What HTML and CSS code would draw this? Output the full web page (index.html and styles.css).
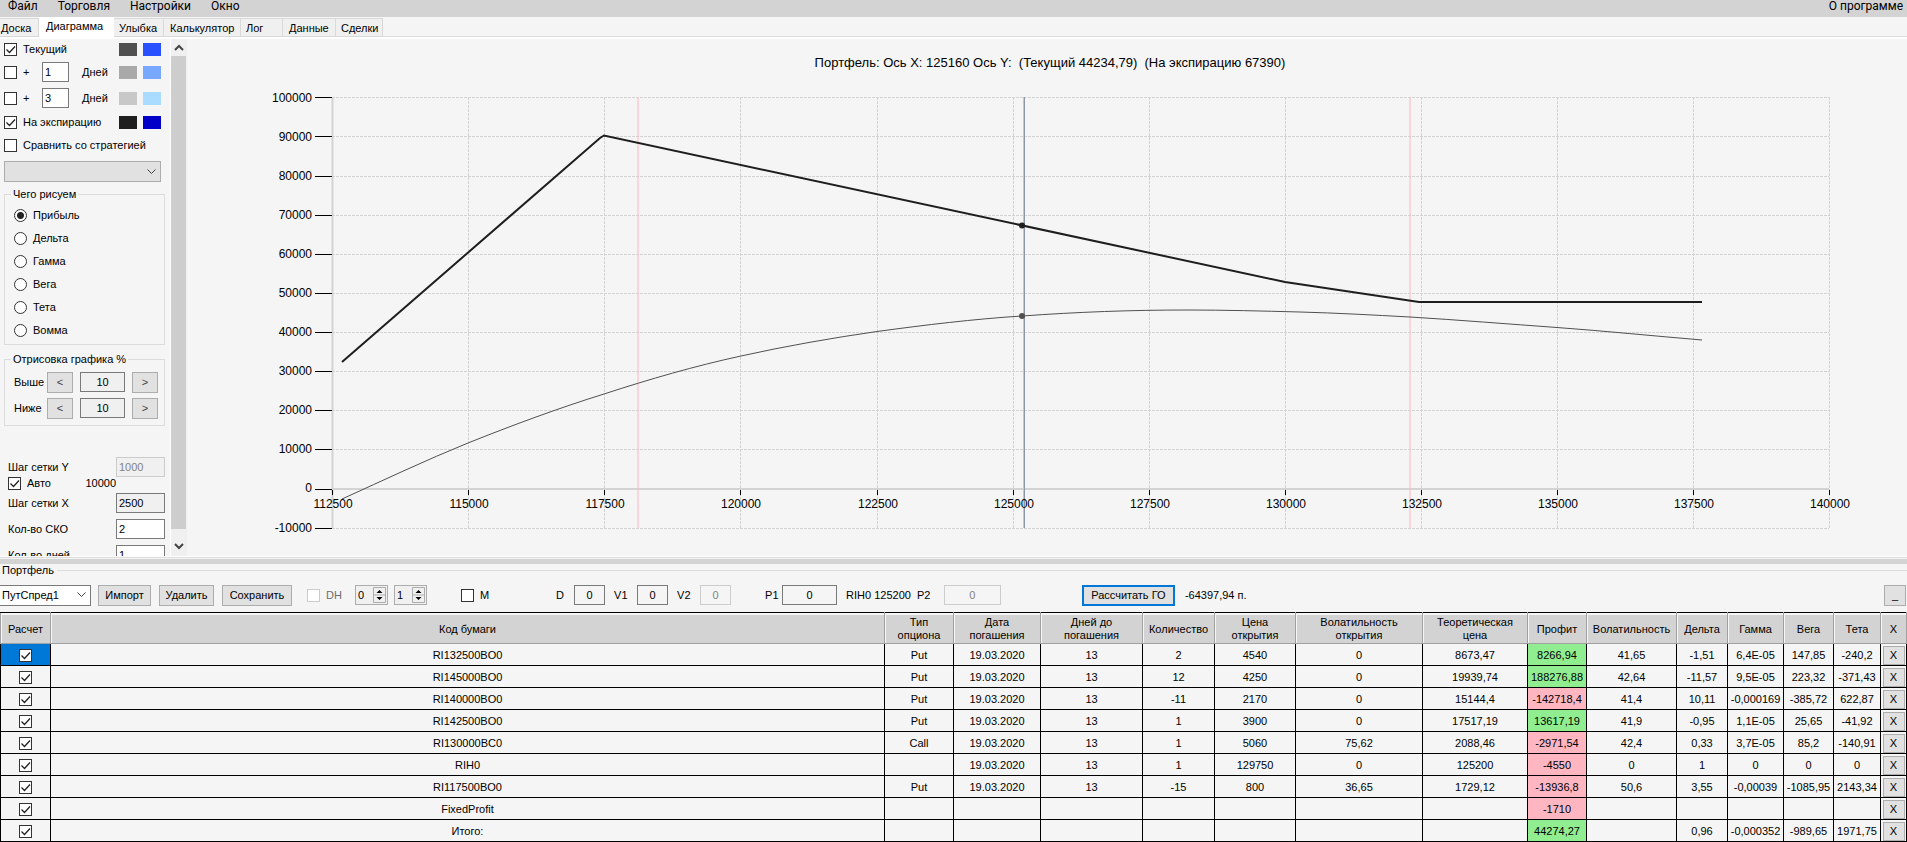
FILE: index.html
```
<!DOCTYPE html>
<html lang="ru">
<head>
    <meta charset="UTF-8">
    <meta name="viewport" content="width=device-width, initial-scale=1.0">
    <title>Портфель</title>
    <link rel="stylesheet" href="styles.css">
</head>
<body>
<div class="app">
    <nav class="menu">
        <a href="#file">Файл</a>
        <a href="#trade">Торговля</a>
        <a href="#settings">Настройки</a>
        <a href="#window">Окно</a>
        <a href="#about" class="about">О программе</a>
    </nav>

    <div class="tabs">
        <button class="tab tab-first">Доска</button>
        <button class="tab active">Диаграмма</button>
        <button class="tab tab-smile">Улыбка</button>
        <button class="tab tab-calc">Калькулятор</button>
        <button class="tab tab-log">Лог</button>
        <button class="tab tab-data">Данные</button>
        <button class="tab tab-deals">Сделки</button>
    </div>

    <main class="workspace">
        <aside class="sidebar">
            <div class="row row-current">
                <input type="checkbox" id="current" checked>
                <label for="current" class="grow">Текущий</label>
                <span class="swatch gray-1"></span><span class="swatch blue-1"></span>
            </div>
            <div class="row row-days">
                <input type="checkbox" id="plus1">
                <label for="plus1" class="plus">+</label>
                <input type="text" class="days" id="days1" value="1">
                <label for="days1" class="grow">Дней</label>
                <span class="swatch gray-2"></span><span class="swatch blue-2"></span>
            </div>
            <div class="row row-days">
                <input type="checkbox" id="plus3">
                <label for="plus3" class="plus">+</label>
                <input type="text" class="days" id="days3" value="3">
                <label for="days3" class="grow">Дней</label>
                <span class="swatch gray-3"></span><span class="swatch blue-3"></span>
            </div>
            <div class="row row-check">
                <input type="checkbox" id="expiry" checked>
                <label for="expiry" class="grow">На экспирацию</label>
                <span class="swatch gray-4"></span><span class="swatch blue-4"></span>
            </div>
            <div class="row row-check">
                <input type="checkbox" id="compare">
                <label for="compare">Сравнить со стратегией</label>
            </div>
            <select class="strategy" aria-label="Стратегия" disabled><option></option></select>

            <fieldset class="box draw">
                <legend>Чего рисуем</legend>
                <label><input type="radio" name="draw" checked>Прибыль</label>
                <label><input type="radio" name="draw">Дельта</label>
                <label><input type="radio" name="draw">Гамма</label>
                <label><input type="radio" name="draw">Вега</label>
                <label><input type="radio" name="draw">Тета</label>
                <label><input type="radio" name="draw">Вомма</label>
            </fieldset>

            <fieldset class="box range">
                <legend>Отрисовка графика %</legend>
                <div class="range-row">
                    <label for="above">Выше</label>
                    <button class="btn">&lt;</button>
                    <input type="text" id="above" value="10" readonly>
                    <button class="btn">&gt;</button>
                </div>
                <div class="range-row">
                    <label for="below">Ниже</label>
                    <button class="btn">&lt;</button>
                    <input type="text" id="below" value="10" readonly>
                    <button class="btn">&gt;</button>
                </div>
            </fieldset>

            <div class="steps">
                <div class="step">
                    <label for="stepY">Шаг сетки Y</label>
                    <input type="text" id="stepY" value="1000" disabled>
                </div>
                <div class="auto">
                    <input type="checkbox" id="auto" checked>
                    <label for="auto">Авто</label>
                    <span class="auto-value">10000</span>
                </div>
                <div class="step">
                    <label for="stepX">Шаг сетки X</label>
                    <input type="text" id="stepX" value="2500" readonly>
                </div>
                <div class="step">
                    <label for="sko">Кол-во СКО</label>
                    <input type="text" id="sko" value="2">
                </div>
                <div class="step">
                    <label for="dayCount">Кол-во дней</label>
                    <input type="text" id="dayCount" value="1">
                </div>
            </div>
        </aside>

        <div class="scrollbar" aria-hidden="true">
            <svg viewBox="0 0 16 17"><path d="M4 11l4-4 4 4"/></svg>
            <div class="thumb"></div>
            <svg viewBox="0 0 16 27"><path d="M4 15l4 4 4-4"/></svg>
        </div>

        <div class="chart">
            <svg viewBox="0 0 1720 517" role="img" aria-label="График прибыли портфеля">
                <text class="title" x="863" y="28">Портфель: Ось X: 125160 Ось Y: &#160;(Текущий 44234,79) &#160;(На экспирацию 67390)</text>

                <!-- сетка -->
                <path class="grid" d="M145 58.5H1642M145 97.5H1642M145 137.5H1642M145 176.5H1642M145 215.5H1642M145 254.5H1642M145 293.5H1642M145 332.5H1642M145 371.5H1642M145 410.5H1642M145 489.5H1642"/>
                <path class="grid" d="M281.5 58V489M417.5 58V489M553.5 58V489M690.5 58V489M826.5 58V489M962.5 58V489M1098.5 58V489M1234.5 58V489M1370.5 58V489M1506.5 58V489M1642.5 58V489"/>

                <!-- оси -->
                <path class="axis" d="M145.5 58V490M145 450H1642"/>
                <path class="tick" d="M128 58.5h17M128 97.5h17M128 137.5h17M128 176.5h17M128 215.5h17M128 254.5h17M128 293.5h17M128 332.5h17M128 371.5h17M128 410.5h17M128 450.5h17M128 489.5h17"/>
                <path class="tick" d="M145.5 451v5M281.5 451v5M417.5 451v5M553.5 451v5M690.5 451v5M826.5 451v5M962.5 451v5M1098.5 451v5M1234.5 451v5M1370.5 451v5M1506.5 451v5M1642.5 451v5"/>

                <path class="sigma" d="M451 58V489M1223 58V489"/>
                <path class="price-light" d="M836.5 58V489"/>
                <path class="price" d="M837.5 58V489"/>

                <path class="line-current" d="M155 460C197 441 239 421 281 404C326 386 372 369 417 355C463 340 508 327 554 317C599 307 645 299 690 292.5C738 286 787 280 835 277C890 273 945 271 1000 271C1038 271 1075 272 1113 273C1150 274 1186 276 1223 278C1272 281 1321 285 1370 288.5C1418 292 1467 297 1515 301"/>
                <path class="line-expiry" d="M155 323L413 99L417 96.500L1098 243L1232 263H1515"/>
                <circle class="dot-expiry" cx="835" cy="186.500" r="3"/>
                <circle class="dot-current" cx="835" cy="277" r="3"/>

                <g class="label-y">
                    <text x="125" y="63">100000</text>
                    <text x="125" y="102">90000</text>
                    <text x="125" y="141">80000</text>
                    <text x="125" y="180">70000</text>
                    <text x="125" y="219">60000</text>
                    <text x="125" y="258">50000</text>
                    <text x="125" y="297">40000</text>
                    <text x="125" y="336">30000</text>
                    <text x="125" y="375">20000</text>
                    <text x="125" y="414">10000</text>
                    <text x="125" y="453">0</text>
                    <text x="125" y="493">-10000</text>
                </g>
                <g class="label-x">
                    <text x="146" y="469">112500</text>
                    <text x="282" y="469">115000</text>
                    <text x="418" y="469">117500</text>
                    <text x="554" y="469">120000</text>
                    <text x="691" y="469">122500</text>
                    <text x="827" y="469">125000</text>
                    <text x="963" y="469">127500</text>
                    <text x="1099" y="469">130000</text>
                    <text x="1235" y="469">132500</text>
                    <text x="1371" y="469">135000</text>
                    <text x="1507" y="469">137500</text>
                    <text x="1643" y="469">140000</text>
                </g>
            </svg>
        </div>
    </main>

    <div class="splitter"></div>

    <fieldset class="portfolio">
        <legend>Портфель</legend>
        <div class="toolbar">
            <select class="portfolio-select" aria-label="Портфель"><option>ПутСпред1</option></select>
            <button class="btn btn-import">Импорт</button>
            <button class="btn btn-delete">Удалить</button>
            <button class="btn btn-save">Сохранить</button>
            <label class="check dh"><input type="checkbox" disabled>DH</label>
            <span class="spinner">
                <input type="text" value="0" aria-label="DH минимум" disabled>
                <svg viewBox="0 0 13 16" aria-hidden="true"><path class="face" d="M.5.5h12v15h-12zM.5 8h12"/><path d="M6.5 3l3 3h-6zM6.5 13l3-3h-6z"/></svg>
            </span>
            <span class="spinner">
                <input type="text" value="1" aria-label="DH максимум" disabled>
                <svg viewBox="0 0 13 16" aria-hidden="true"><path class="face" d="M.5.5h12v15h-12zM.5 8h12"/><path d="M6.5 3l3 3h-6zM6.5 13l3-3h-6z"/></svg>
            </span>
            <label class="check m"><input type="checkbox">M</label>
            <label class="field d">D <input type="text" value="0" readonly></label>
            <label class="field v">V1 <input type="text" value="0" readonly></label>
            <label class="field v">V2 <input type="text" value="0" disabled></label>
            <label class="field p1">P1 <input type="text" value="0" readonly></label>
            <span class="ticker">RIH0 125200</span>
            <label class="field p2">P2 <input type="text" value="0" disabled></label>
            <button class="btn btn-calc">Рассчитать ГО</button>
            <span class="margin-value">-64397,94 п.</span>
            <button class="btn btn-min" aria-label="Свернуть">_</button>
        </div>
    </fieldset>

    <table class="positions">
        <colgroup>
            <col class="c-calc"><col><col class="c-type"><col class="c-date"><col class="c-days"><col class="c-qty">
            <col class="c-open"><col class="c-vopen"><col class="c-theor"><col class="c-profit"><col class="c-vol">
            <col class="c-delta"><col class="c-gamma"><col class="c-vega"><col class="c-theta"><col class="c-x">
        </colgroup>
        <thead>
            <tr>
                <th>Расчет</th><th>Код бумаги</th><th>Тип<br>опциона</th><th>Дата<br>погашения</th><th>Дней до<br>погашения</th><th>Количество</th><th>Цена<br>открытия</th><th>Волатильность<br>открытия</th><th>Теоретическая<br>цена</th><th>Профит</th><th>Волатильность</th><th>Дельта</th><th>Гамма</th><th>Вега</th><th>Тета</th><th>X</th>
            </tr>
        </thead>
        <tbody>
            <tr>
                <td class="selected"><input type="checkbox" aria-label="RI132500BO0" checked></td><td>RI132500BO0</td><td>Put</td><td>19.03.2020</td><td>13</td><td>2</td><td>4540</td><td>0</td><td>8673,47</td><td class="plus-cell">8266,94</td><td>41,65</td><td>-1,51</td><td>6,4E-05</td><td>147,85</td><td>-240,2</td><td><button class="btn">X</button></td>
            </tr>
            <tr>
                <td><input type="checkbox" aria-label="RI145000BO0" checked></td><td>RI145000BO0</td><td>Put</td><td>19.03.2020</td><td>13</td><td>12</td><td>4250</td><td>0</td><td>19939,74</td><td class="plus-cell">188276,88</td><td>42,64</td><td>-11,57</td><td>9,5E-05</td><td>223,32</td><td>-371,43</td><td><button class="btn">X</button></td>
            </tr>
            <tr>
                <td><input type="checkbox" aria-label="RI140000BO0" checked></td><td>RI140000BO0</td><td>Put</td><td>19.03.2020</td><td>13</td><td>-11</td><td>2170</td><td>0</td><td>15144,4</td><td class="minus-cell">-142718,4</td><td>41,4</td><td>10,11</td><td>-0,000169</td><td>-385,72</td><td>622,87</td><td><button class="btn">X</button></td>
            </tr>
            <tr>
                <td><input type="checkbox" aria-label="RI142500BO0" checked></td><td>RI142500BO0</td><td>Put</td><td>19.03.2020</td><td>13</td><td>1</td><td>3900</td><td>0</td><td>17517,19</td><td class="plus-cell">13617,19</td><td>41,9</td><td>-0,95</td><td>1,1E-05</td><td>25,65</td><td>-41,92</td><td><button class="btn">X</button></td>
            </tr>
            <tr>
                <td><input type="checkbox" aria-label="RI130000BC0" checked></td><td>RI130000BC0</td><td>Call</td><td>19.03.2020</td><td>13</td><td>1</td><td>5060</td><td>75,62</td><td>2088,46</td><td class="minus-cell">-2971,54</td><td>42,4</td><td>0,33</td><td>3,7E-05</td><td>85,2</td><td>-140,91</td><td><button class="btn">X</button></td>
            </tr>
            <tr>
                <td><input type="checkbox" aria-label="RIH0" checked></td><td>RIH0</td><td></td><td>19.03.2020</td><td>13</td><td>1</td><td>129750</td><td>0</td><td>125200</td><td class="minus-cell">-4550</td><td>0</td><td>1</td><td>0</td><td>0</td><td>0</td><td><button class="btn">X</button></td>
            </tr>
            <tr>
                <td><input type="checkbox" aria-label="RI117500BO0" checked></td><td>RI117500BO0</td><td>Put</td><td>19.03.2020</td><td>13</td><td>-15</td><td>800</td><td>36,65</td><td>1729,12</td><td class="minus-cell">-13936,8</td><td>50,6</td><td>3,55</td><td>-0,00039</td><td>-1085,95</td><td>2143,34</td><td><button class="btn">X</button></td>
            </tr>
            <tr>
                <td><input type="checkbox" aria-label="FixedProfit" checked></td><td>FixedProfit</td><td></td><td></td><td></td><td></td><td></td><td></td><td></td><td class="minus-cell">-1710</td><td></td><td></td><td></td><td></td><td></td><td><button class="btn">X</button></td>
            </tr>
            <tr>
                <td><input type="checkbox" aria-label="Итого" checked></td><td>Итого:</td><td></td><td></td><td></td><td></td><td></td><td></td><td></td><td class="plus-cell">44274,27</td><td></td><td>0,96</td><td>-0,000352</td><td>-989,65</td><td>1971,75</td><td><button class="btn">X</button></td>
            </tr>
        </tbody>
    </table>
</div>
</body>
</html>
```
FILE: styles.css
```
* {
    box-sizing: border-box;
}
body {
    margin: 0;
    background: #f5f5f5;
    color: #000;
    font: 11px/13px "Liberation Sans", Arial, sans-serif;
}
button, input, select {
    margin: 0;
    font: inherit;
    color: inherit;
    border-radius: 0;
}
.app {
    display: flex;
    flex-direction: column;
    height: 100vh;
    overflow: hidden;
}

/* меню */
.menu {
    display: flex;
    flex: none;
    gap: 20px;
    height: 17px;
    padding: 0 4px 0 8px;
    background: #d3d3d3;
    font: 12px/12px Roboto, "Noto Sans", sans-serif;
}
.menu a {
    color: #000;
    text-decoration: none;
}
.menu .about {
    margin-left: auto;
}

/* вкладки */
.tabs {
    display: flex;
    flex: none;
    align-items: flex-end;
    height: 22px;
    border-bottom: 2px solid #fff;
    box-shadow: inset 0 -1px #dcdcdc;
}
.tab {
    height: 19px;
    padding: 2px 0 0 5px;
    border: 1px solid #d9d9d9;
    border-left: none;
    background: #f0f0f0;
    text-align: left;
    white-space: nowrap;
}
.tab.active {
    width: 75px;
    height: 20px;
    padding: 0 0 1px 7px;
    border-color: #fff;
    background: #fff;
}
.tab-first {
    width: 39px;
    padding-left: 1px;
}
.tab-smile {
    width: 50px;
}
.tab-calc {
    width: 77px;
    padding-left: 6px;
}
.tab-log {
    width: 42px;
}
.tab-data {
    width: 53px;
    padding-left: 6px;
}
.tab-deals {
    width: 47px;
}

.workspace {
    display: flex;
    flex: 1;
    min-height: 0;
    border-bottom: 1px solid #fff;
}

/* общие элементы */
input[type="checkbox"],
input[type="radio"] {
    appearance: none;
    flex: none;
    width: 13px;
    height: 13px;
    border: 1px solid #333;
    background: #fff center / 11px 11px no-repeat;
}
input[type="checkbox"]:checked {
    background-image: url("data:image/svg+xml,%3Csvg xmlns='http://www.w3.org/2000/svg' viewBox='0 0 11 11'%3E%3Cpath d='M1.5 5.5l3 3 5.5-6' fill='none' stroke='%23222' stroke-width='1.3'/%3E%3C/svg%3E");
}
input[type="checkbox"]:disabled {
    border-color: #ccc;
}
input[type="radio"] {
    border-radius: 50%;
}
input[type="radio"]:checked {
    background-image: radial-gradient(circle, #222 3px, #fff 4px);
}
input[type="text"] {
    width: 100%;
    height: 20px;
    padding: 0 2px;
    border: 1px solid #7a7a7a;
    background: #fff;
}
input[type="text"]:read-only {
    background: #f0f0f0;
}
input[type="text"]:disabled {
    border-color: #ccc;
    background: #f0f0f0;
    color: #838383;
}
select {
    appearance: none;
    height: 21px;
    padding: 0 2px;
    border: 1px solid #7a7a7a;
    background: #fff url("data:image/svg+xml,%3Csvg xmlns='http://www.w3.org/2000/svg' viewBox='0 0 9 6'%3E%3Cpath d='M.5.5l4 4 4-4' fill='none' stroke='%23444'/%3E%3C/svg%3E") right 4px center / 9px 6px no-repeat;
}
.btn {
    height: 21px;
    padding: 0;
    border: 1px solid #adadad;
    background: #e1e1e1;
    text-align: center;
}

/* левая панель */
.sidebar {
    flex: none;
    width: 171px;
    padding: 0 5px 0 4px;
    overflow: hidden;
    border-right: 1px solid #fff;
}
.row {
    display: flex;
    align-items: center;
    padding-right: 4px;
    white-space: nowrap;
}
.row input[type="checkbox"] {
    margin-right: 6px;
}
.row-current {
    height: 20px;
}
.row-days {
    height: 26px;
}
.row-check {
    height: 23px;
}
.grow {
    flex: 1;
}
.plus {
    width: 19px;
}
.row .days {
    width: 27px;
    margin-right: 13px;
}
.swatch {
    width: 18px;
    height: 13px;
    margin-left: 6px;
}
.gray-1 {
    background: #505050;
}
.gray-2 {
    background: #a9a9a9;
}
.gray-3 {
    background: #c8c8c8;
}
.gray-4 {
    background: #1e1e1e;
}
.blue-1 {
    background: #2850ff;
}
.blue-2 {
    background: #78a8ff;
}
.blue-3 {
    background: #aadcff;
}
.blue-4 {
    background: #0000c8;
}
.strategy {
    display: block;
    width: 157px;
    margin-top: 4px;
    border-color: #adadad;
    background-color: #e1e1e1;
    opacity: 1;
}
.box {
    min-width: 0;
    margin: 6px 0 0;
    padding: 3px 6px 2px 9px;
    border: 1px solid #dcdcdc;
}
.box legend {
    margin-left: -3px;
    padding: 0 2px;
}
.draw label {
    display: flex;
    align-items: center;
    gap: 6px;
    height: 23px;
}
.range {
    margin-top: 8px;
    padding-bottom: 4px;
}
.range-row {
    display: flex;
    align-items: center;
    height: 26px;
}
.range-row label {
    width: 33px;
}
.range-row .btn {
    flex: none;
    width: 26px;
    color: #444;
}
.range-row input[type="text"] {
    width: 45px;
    margin: 0 7px;
    text-align: center;
}
.steps {
    display: flex;
    flex-direction: column;
    gap: 6px;
    margin-top: 31px;
    padding-left: 4px;
}
.step {
    display: flex;
    align-items: center;
    justify-content: space-between;
}
.step input[type="text"] {
    width: 49px;
}
.auto {
    display: flex;
    align-items: center;
    gap: 6px;
    margin: -6px 0 -3px;
}
.auto-value {
    margin-left: auto;
    padding-right: 49px;
}
.scrollbar {
    display: flex;
    flex: none;
    flex-direction: column;
    width: 16px;
    background: #f0f0f0;
}
.scrollbar svg {
    display: block;
    width: 16px;
    fill: none;
    stroke: #444;
    stroke-width: 2;
}
.thumb {
    flex: 1;
    width: 15px;
    background: #cdcdcd;
}

/* график */
.chart {
    flex: 1;
    min-width: 0;
}
.chart svg {
    display: block;
    width: 100%;
    height: 100%;
}
.chart text {
    font-size: 12px;
    text-anchor: middle;
}
.chart .title {
    font-size: 13px;
}
.chart .label-y text {
    text-anchor: end;
}
.grid, .axis, .tick, .sigma, .price, .price-light, .line-current, .line-expiry {
    fill: none;
    stroke: #d3d3d3;
}
.grid {
    stroke-dasharray: 3 1;
}
.axis {
    stroke-width: 2;
}
.tick {
    stroke: #000;
}
.sigma {
    stroke: #ffb6c1;
    stroke-width: 2;
    opacity: .5;
}
.price-light {
    stroke: #c4c8ce;
}
.price {
    stroke: #8c96a5;
}
.line-current {
    stroke: #505050;
}
.line-expiry {
    stroke: #1e1e1e;
    stroke-width: 2;
}
.dot-expiry {
    fill: #1e1e1e;
}
.dot-current {
    fill: #505050;
}

.splitter {
    flex: none;
    height: 7px;
    border-top: 1px solid #dcdcdc;
    border-bottom: 5px solid #d3d3d3;
}

/* портфель */
.portfolio {
    flex: none;
    min-width: 0;
    margin: 0;
    padding: 7px 1px 6px 0;
    border: none;
    border-top: 1px solid #dcdcdc;
}
.portfolio legend {
    padding: 0 3px 0 2px;
}
.toolbar {
    display: flex;
    align-items: center;
    height: 22px;
    white-space: nowrap;
}
.toolbar > * {
    flex: none;
}
.portfolio-select {
    width: 91px;
    border-left: none;
    margin-right: 7px;
}
.btn-import {
    width: 53px;
}
.btn-delete {
    width: 55px;
    margin: 0 8px;
}
.btn-save {
    width: 70px;
}
.check {
    display: flex;
    align-items: center;
    gap: 6px;
}
.dh {
    margin: 0 13px 0 15px;
    color: #6d6d6d;
}
.spinner {
    display: flex;
    align-items: center;
    width: 33px;
    height: 20px;
    margin-right: 6px;
    padding-right: 1px;
    border: 1px solid #adadad;
    background: #f0f0f0;
}
.spinner input[type="text"] {
    flex: 1;
    min-width: 0;
    height: 16px;
    border: none;
    color: #000;
}
.spinner svg {
    width: 13px;
    height: 16px;
}
.face {
    fill: #f0f0f0;
    stroke: #adadad;
}
.m {
    margin: 0 67px 0 28px;
}
.field {
    display: flex;
    align-items: center;
    justify-content: space-between;
    margin-right: 9px;
}
.field input[type="text"] {
    width: 31px;
    text-align: center;
    background: #f5f5f5;
}
.d {
    width: 49px;
}
.v {
    width: 54px;
}
.p1 {
    width: 72px;
    margin-left: 25px;
}
.p1 input[type="text"] {
    width: 55px;
}
.p2 {
    width: 84px;
    margin: 0 81px 0 6px;
}
.p2 input[type="text"] {
    width: 57px;
}
.btn-calc {
    width: 93px;
    margin-right: 10px;
    border: 2px solid #0078d7;
}
.btn-min {
    width: 22px;
    margin-left: auto;
}

/* таблица позиций */
.positions {
    flex: none;
    width: 100%;
    table-layout: fixed;
    border-collapse: collapse;
    border: 1px solid #000;
}
.positions th {
    height: 31px;
    padding: 2px 0 0;
    border: 1px solid #a0a0a0;
    border-top-color: #000;
    background: #d3d3d3;
    box-shadow: inset 1px 2px #f5f5f5;
    font-weight: normal;
}
.positions td {
    height: 22px;
    padding: 1px 0 0;
    border: 1px solid #000;
    text-align: center;
    white-space: nowrap;
}
.positions input {
    display: block;
    margin: 0 auto;
}
.positions .btn {
    display: block;
    width: 22px;
    height: 19px;
    margin: 0 auto;
}
.positions .selected {
    background: #0078d7;
}
.plus-cell {
    background: #90ee90;
}
.minus-cell {
    background: #ffb6c1;
}
.c-calc {
    width: 50px;
}
.c-type {
    width: 69px;
}
.c-date {
    width: 87px;
}
.c-days {
    width: 102px;
}
.c-qty {
    width: 72px;
}
.c-open {
    width: 81px;
}
.c-vopen {
    width: 127px;
}
.c-theor {
    width: 105px;
}
.c-profit {
    width: 59px;
}
.c-vol {
    width: 90px;
}
.c-delta {
    width: 51px;
}
.c-gamma {
    width: 56px;
}
.c-vega {
    width: 50px;
}
.c-theta {
    width: 47px;
}
.c-x {
    width: 26px;
}
```
